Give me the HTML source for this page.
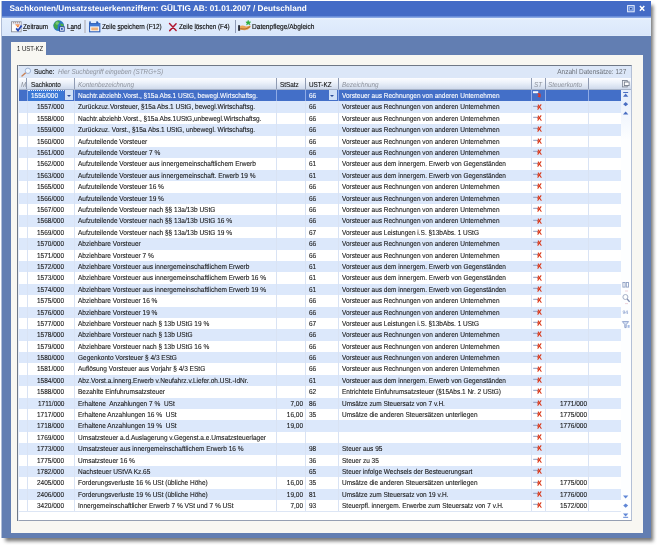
<!DOCTYPE html>
<html><head><meta charset="utf-8">
<style>
html,body{margin:0;padding:0;background:#fff;}
body{width:658px;height:547px;position:relative;overflow:hidden;text-rendering:geometricPrecision;font-family:"Liberation Sans",sans-serif;font-size:7.2px;color:#151515;}
*{box-sizing:border-box;}
.abs{position:absolute;}
i.s{display:inline-block;font-style:normal;transform:scaleX(.91);transform-origin:0 50%;white-space:nowrap;}
i.n{display:inline-block;font-style:normal;transform:scaleX(.9);transform-origin:100% 50%;white-space:nowrap;}
i.it{font-style:italic;}
#win{will-change:transform;left:1.5px;top:1.2px;width:648.5px;height:536.8px;background:#627eb2;box-shadow:-1px 0 0 0 rgba(98,126,178,.5),2.5px 3.5px 3.5px 0 rgba(30,30,30,.6);}
#title{left:0;top:0;width:100%;height:14.8px;background:#446bc6;color:#fff;font-weight:bold;font-size:8.2px;line-height:16px;padding-left:7.6px;white-space:nowrap;}
#tline{left:0;top:14.6px;width:100%;height:2.2px;background:linear-gradient(#5b80d2,#9ab6ea);}
#tool{left:0;top:16.7px;width:100%;height:18.2px;background:linear-gradient(#ecf3fe 0,#e2edfc 2px,#dbe8fb 15px,#d8e6fa 17px,#e6effc 18.2px);}
#tool .t{position:absolute;top:0;line-height:18.2px;font-size:7.3px;white-space:nowrap;color:#0c0c0c;-webkit-text-stroke:.15px #0c0c0c;}
#tool .t i.s{transform:scaleX(.865);}
#tool u{text-decoration:underline;text-decoration-thickness:.6px;text-underline-offset:.6px;text-decoration-color:#555;}
.sep{position:absolute;top:2.2px;width:1.3px;height:13px;background:#a5adc2;}
#tab{left:9.3px;top:40.5px;width:35px;height:14px;background:#f8f7f2;line-height:13.5px;padding-left:5.7px;white-space:nowrap;}
#panel{left:9.3px;top:53.5px;width:632.2px;height:478.5px;background:#f8f7f2;}
#grid{left:15.6px;top:64.1px;width:614.6px;height:456px;background:#fff;border:1px solid #6f7886;border-left-color:#e6eefa;border-right-color:#b4c0d6;border-bottom-color:#959fb2;overflow:hidden;box-shadow:-1px 0 0 0 #6f7886;}
#search{left:0;top:0;width:613px;height:11.9px;background:#dce7f8;line-height:11.6px;white-space:nowrap;}
#hdr{left:0;top:11.9px;width:613px;height:12.1px;background:linear-gradient(#fcfdff 0%,#edf2fa 40%,#cfdaec 100%);border-bottom:1.2px solid #a7b3c8;}
.h{position:absolute;top:0;height:11px;line-height:12.8px;border-left:1px solid #8f9bb3;padding-left:2.9px;white-space:nowrap;color:#111;-webkit-text-stroke:.12px #111;}
.h i.s{transform:scaleX(.88);position:relative;top:.7px;}
.h.i{color:#8d929c;-webkit-text-stroke:0;}
#rows{left:0;top:24px;width:602.4px;height:431px;}
.r{position:absolute;left:0;width:602.4px;height:11.39px;line-height:11.5px;white-space:nowrap;-webkit-text-stroke:.1px currentColor;}
.r.alt{background:#dce8fb;}
.r.sel{background:#436fc8;color:#fff;}
.c{position:absolute;top:0;height:11.37px;}
.c1{left:8.4px;width:37.2px;text-align:right;}
.c2{left:59.6px;width:197px;}
.c2 i.s{transform:scaleX(.907);}
.c3{left:258px;width:26.3px;text-align:right;}
.c4{left:290.1px;width:30px;}
.c5{left:323.6px;width:188px;}
.c5 i.s{transform:scaleX(.902);}
.c6{left:513.6px;width:12px;}
.c7{left:526px;width:42.2px;text-align:right;}
.c4 i.n{transform-origin:0 50%;}
.sti{position:absolute;left:1.1px;top:1.2px;width:9px;height:8px;}
.vl{position:absolute;top:24px;width:1px;height:421.3px;background:#d9e3f4;}
.vs{position:absolute;top:24px;width:1px;height:11.4px;background:#8fabe6;}
#nav{left:602.4px;top:24px;width:10.6px;height:431px;background:linear-gradient(#e6eefb 0px,#fdfeff 50px);}
svg{position:absolute;overflow:visible;}
.ed{position:absolute;left:9.7px;top:0.4px;width:36.2px;height:10.2px;background:#3a78d6;border-top:1px dotted #e8f0ff;}
.dd{position:absolute;top:.4px;width:7.8px;height:9.6px;background:#cfe0f7;}
.dd:after{content:"";position:absolute;left:1.7px;top:4.2px;border:2.1px solid transparent;border-top:2.6px solid #2d4e9a;border-bottom:none;}
</style></head><body>
<div id="win" class="abs">
 <div id="title" class="abs">Sachkonten/Umsatzsteuerkennziffern: GÜLTIG AB: 01.01.2007 / Deutschland</div>
 <!-- window buttons -->
 <svg style="left:625.2px;top:4px" width="20" height="8" viewBox="0 0 20 8">
  <rect x="0.6" y="0.6" width="6.6" height="6.2" fill="#5f86d8" stroke="#e6edfc" stroke-width="1"/>
  <rect x="2.2" y="2" width="3.4" height="3.4" fill="#9db8ee"/>
  <rect x="3.1" y="2.9" width="1.6" height="1.6" fill="#1f3f8f"/>
  <path d="M12.9 0.9 L17.3 5.7 M17.3 0.9 L12.9 5.7" stroke="#fff" stroke-width="1.5"/>
 </svg>
 <div id="tline" class="abs"></div>
 <div id="tool" class="abs">
  <!-- calendar icon -->
  <svg style="left:8.6px;top:3px" width="12" height="12" viewBox="0 0 12 12">
   <rect x="0.5" y="0.8" width="9.6" height="10" fill="#fdfdfd" stroke="#8a8f9a" stroke-width=".9"/>
   <rect x="1.2" y="1.2" width="8.4" height="2.4" fill="#e9ecf2"/>
   <path d="M2 1.8h1.2M4 1.8h1.2M6 1.8h1.2M8 1.8h1" stroke="#8a6a6a" stroke-width=".9"/>
   <path d="M4.2 3.6 L8.8 3.6 L7 6.6 Z" fill="#e8562a"/>
   <path d="M4.8 4.4 L7.8 4.4" stroke="#ffd36a" stroke-width=".8"/>
   <path d="M5.2 7.4 L7 9.6 L10.6 4.6" stroke="#2448b8" stroke-width="1.7" fill="none"/>
  </svg>
  <span class="t" style="left:21.4px"><i class="s"><u>Z</u>eitraum</i></span>
  <!-- globe -->
  <svg style="left:51px;top:2.8px" width="12" height="12" viewBox="0 0 12 12">
   <circle cx="5.7" cy="5.7" r="5.4" fill="#2c78c8"/>
   <path d="M2.2 2.2 C3.6 0.6 6 0.4 7.2 1.4 C6.6 3 5.4 3.2 5 4.6 C4.4 6.2 5.2 7.6 4.2 9.4 C2.6 9.6 0.8 7.6 0.6 5.6 C0.8 4 1.4 3 2.2 2.2Z" fill="#3fa548"/>
   <path d="M7.6 3.6 C9 3.2 10.4 4 10.8 5.4 C10.4 6.6 9.2 6.8 8.2 6.2 C7.4 5.6 7 4.4 7.6 3.6Z" fill="#4cb04a"/>
   <circle cx="4.2" cy="3.2" r="1.6" fill="#a6e09a" opacity=".55"/>
   <rect x="6.6" y="6.8" width="4.6" height="4.4" fill="#f4f7fc" stroke="#1d3f8c" stroke-width=".9"/>
   <rect x="7.8" y="8" width="2" height="1.8" fill="#2a56b8"/>
  </svg>
  <span class="t" style="left:64.6px"><i class="s">L<u>a</u>nd</i></span>
  <div class="sep" style="left:82.4px;background:#c3c8d4;width:1.8px"></div>
  <!-- save -->
  <svg style="left:87.2px;top:3.2px" width="12" height="12" viewBox="0 0 12 12">
   <rect x="0.6" y="2.6" width="10.2" height="8.2" fill="#fbfcff" stroke="#2e5eb4" stroke-width="1.1"/>
   <rect x="0.2" y="0.4" width="1.6" height="3" fill="#2e5eb4"/>
   <rect x="7.2" y="0.4" width="1.8" height="3" fill="#2e5eb4"/>
   <path d="M9 1 L11.2 3.2 L9 3.2Z" fill="#3c74d0"/>
   <rect x="0.6" y="2.8" width="10.2" height="2.6" fill="#3f78d4"/>
   <rect x="2.2" y="6.4" width="7" height="3" fill="#f6c89a"/>
   <path d="M2.6 7.3h6.2M2.6 8.6h6.2" stroke="#e8a468" stroke-width=".7"/>
  </svg>
  <span class="t" style="left:100px"><i class="s">Zeile <u>s</u>peichern (F12)</i></span>
  <!-- red X -->
  <svg style="left:166.6px;top:5.2px" width="8.2" height="8.6" viewBox="0 0 9 9" preserveAspectRatio="none">
   <path d="M0.6 0.6 L7.8 7.8 M7.8 0.8 L0.8 8" stroke="#b0142e" stroke-width="1.6" stroke-linecap="round"/>
  </svg>
  <span class="t" style="left:177.3px"><i class="s">Zeile <u>l</u>öschen (F4)</i></span>
  <div class="sep" style="left:233.4px;background:#8e9ab6;width:1px"></div>
  <!-- hand -->
  <svg style="left:236.4px;top:2.8px" width="14" height="12" viewBox="0 0 14 12">
   <rect x="0.1" y="5.2" width="2" height="5.6" fill="#2b2f3a"/>
   <path d="M2.1 6.2 C4 4.8 6 6 8 6.4 C10 6.6 11.6 5.4 12.8 6 C12.6 8 9.6 10.4 6.6 10.2 C4.8 10 3.4 9.6 2.1 9.8Z" fill="#e9a557"/>
   <path d="M2.1 8.8 C4.6 8.6 7.4 10.2 12 6.6" stroke="#a45f22" stroke-width=".9" fill="none"/>
   <path d="M10.2 0.4 L10.9 2 L12.6 2 L11.3 3.1 L11.9 4.8 L10.2 3.8 L8.6 4.8 L9.2 3.1 L7.9 2 L9.6 2Z" fill="#2fae3a" stroke="#2fae3a" stroke-width=".7"/>
  </svg>
  <span class="t" style="left:249.7px"><i class="s" style="transform:scaleX(.9)">Datenpflege/Abgleich</i></span>
 </div>
 <div id="tab" class="abs"><i class="s" style="transform:scaleX(.83)">1 UST-KZ</i></div>
 <div id="panel" class="abs"></div>
 <div id="grid" class="abs">
  <div id="search" class="abs">
   <svg style="left:2.1px;top:0.9px" width="12" height="10" viewBox="0 0 12 10">
    <path d="M1 9 L5 5.4" stroke="#c98258" stroke-width="1.4" stroke-linecap="round"/>
    <circle cx="6.9" cy="3.8" r="2.7" fill="#eef6ff" stroke="#9fb4d6" stroke-width="1"/>
   </svg>
   <span style="position:absolute;left:15.5px;color:#111;-webkit-text-stroke:.12px #111"><i class="s">Suche:</i></span>
   <span style="position:absolute;left:39.8px;color:#8d929c"><i class="s it" style="transform:scaleX(.885)">Hier Suchbegriff eingeben (STRG+S)</i></span>
   <span style="position:absolute;right:5.4px;color:#6b7078"><i class="s" style="transform-origin:100% 50%;transform:scaleX(.905)">Anzahl Datensätze: 127</i></span>
  </div>
  <div id="hdr" class="abs">
   <span class="h i" style="left:0.6px;width:8px;padding-left:1.5px;border-left:none"><i class="s it">M</i></span>
   <span class="h" style="left:7.8px;width:48px;padding-left:3.8px"><i class="s">Sachkonto</i></span>
   <span class="h i" style="left:55.8px;width:201px"><i class="s it">Kontenbezeichnung</i></span>
   <span class="h" style="left:257.1px;width:29px"><i class="s">StSatz</i></span>
   <span class="h" style="left:286.2px;width:34px"><i class="s">UST-KZ</i></span>
   <span class="h i" style="left:319.7px;width:192px"><i class="s it">Bezeichnung</i></span>
   <span class="h i" style="left:512.4px;width:14px;padding-left:1.8px"><i class="s it">ST</i></span>
   <span class="h i" style="left:526px;width:44px"><i class="s it">Steuerkonto</i></span>
   <span class="h" style="left:569.3px;width:20px"></span>
   <svg style="left:603.2px;top:2.4px" width="8" height="8" viewBox="0 0 9 8" preserveAspectRatio="none">
    <rect x="0.5" y="0.5" width="5.4" height="6.4" fill="#f4f6fa" stroke="#7c8494" stroke-width=".9"/>
    <rect x="2.6" y="2" width="5.4" height="3.6" fill="#fdfdfe" stroke="#6f7786" stroke-width=".9"/>
   </svg>
  </div>
  <div id="rows" class="abs">
<div class="r sel" style="top:0.00px"><span class="ed"></span><span class="c" style="left:12.9px"><i class="n" style="transform-origin:0 50%">1556/000</i></span><span class="dd" style="left:46.8px"></span><span class="c c2"><i class="s">Nachtr.abziehb.Vorst., §15a Abs.1 UStG, bewegl.Wirtschaftsg.</i></span><span class="c c3"><i class="n"></i></span><span class="c c4"><i class="n">66</i></span><span class="dd" style="left:310.2px"></span><span class="c c5"><i class="s">Vorsteuer aus Rechnungen von anderen Unternehmen</i></span><span class="c c6"><svg class="sti" viewBox="0 0 9 8"><rect x="0" y="0.2" width="5.2" height="2" fill="#f4f7fd"/><path d="M4.6 2.6 L7.6 3.4 M5.4 2.6 L7.2 6.4 M4.8 5.4 L7.8 4.6" stroke="#d8382a" stroke-width="1.2" fill="none"/></svg></span><span class="c c7"><i class="n"></i></span></div>
<div class="r alt" style="top:11.39px"><span class="c c1"><i class="n">1557/000</i></span><span class="c c2"><i class="s">Zurückzuz.Vorsteuer, §15a Abs.1 UStG, bewegl.Wirtschaftsg.</i></span><span class="c c3"><i class="n"></i></span><span class="c c4"><i class="n">66</i></span><span class="c c5"><i class="s">Vorsteuer aus Rechnungen von anderen Unternehmen</i></span><span class="c c6"><svg class="sti" viewBox="0 0 9 8"><path d="M0.2 3.3 L5 3.3" stroke="#8c9abf" stroke-width="1"/><path d="M4 3.9 L6.6 3.9 M4.6 6.6 L8.2 1.4 M5 1.6 L8.4 6.8" stroke="#da3a1c" stroke-width="1.05" fill="none"/></svg></span><span class="c c7"><i class="n"></i></span></div>
<div class="r" style="top:22.78px"><span class="c c1"><i class="n">1558/000</i></span><span class="c c2"><i class="s">Nachtr.abziehb.Vorst., §15a Abs.1UStG,unbewegl.Wirtschaftsg.</i></span><span class="c c3"><i class="n"></i></span><span class="c c4"><i class="n">66</i></span><span class="c c5"><i class="s">Vorsteuer aus Rechnungen von anderen Unternehmen</i></span><span class="c c6"><svg class="sti" viewBox="0 0 9 8"><path d="M0.2 3.3 L5 3.3" stroke="#8c9abf" stroke-width="1"/><path d="M4 3.9 L6.6 3.9 M4.6 6.6 L8.2 1.4 M5 1.6 L8.4 6.8" stroke="#da3a1c" stroke-width="1.05" fill="none"/></svg></span><span class="c c7"><i class="n"></i></span></div>
<div class="r alt" style="top:34.17px"><span class="c c1"><i class="n">1559/000</i></span><span class="c c2"><i class="s">Zurückzuz. Vorst., §15a Abs.1 UStG, unbewegl. Wirtschaftsg.</i></span><span class="c c3"><i class="n"></i></span><span class="c c4"><i class="n">66</i></span><span class="c c5"><i class="s">Vorsteuer aus Rechnungen von anderen Unternehmen</i></span><span class="c c6"><svg class="sti" viewBox="0 0 9 8"><path d="M0.2 3.3 L5 3.3" stroke="#8c9abf" stroke-width="1"/><path d="M4 3.9 L6.6 3.9 M4.6 6.6 L8.2 1.4 M5 1.6 L8.4 6.8" stroke="#da3a1c" stroke-width="1.05" fill="none"/></svg></span><span class="c c7"><i class="n"></i></span></div>
<div class="r" style="top:45.56px"><span class="c c1"><i class="n">1560/000</i></span><span class="c c2"><i class="s">Aufzuteilende Vorsteuer</i></span><span class="c c3"><i class="n"></i></span><span class="c c4"><i class="n">66</i></span><span class="c c5"><i class="s">Vorsteuer aus Rechnungen von anderen Unternehmen</i></span><span class="c c6"><svg class="sti" viewBox="0 0 9 8"><path d="M0.2 3.3 L5 3.3" stroke="#8c9abf" stroke-width="1"/><path d="M4 3.9 L6.6 3.9 M4.6 6.6 L8.2 1.4 M5 1.6 L8.4 6.8" stroke="#da3a1c" stroke-width="1.05" fill="none"/></svg></span><span class="c c7"><i class="n"></i></span></div>
<div class="r alt" style="top:56.95px"><span class="c c1"><i class="n">1561/000</i></span><span class="c c2"><i class="s">Aufzuteilende Vorsteuer 7 %</i></span><span class="c c3"><i class="n"></i></span><span class="c c4"><i class="n">66</i></span><span class="c c5"><i class="s">Vorsteuer aus Rechnungen von anderen Unternehmen</i></span><span class="c c6"><svg class="sti" viewBox="0 0 9 8"><path d="M0.2 3.3 L5 3.3" stroke="#8c9abf" stroke-width="1"/><path d="M4 3.9 L6.6 3.9 M4.6 6.6 L8.2 1.4 M5 1.6 L8.4 6.8" stroke="#da3a1c" stroke-width="1.05" fill="none"/></svg></span><span class="c c7"><i class="n"></i></span></div>
<div class="r" style="top:68.34px"><span class="c c1"><i class="n">1562/000</i></span><span class="c c2"><i class="s">Aufzuteilende Vorsteuer aus innergemeinschaftlichem Erwerb</i></span><span class="c c3"><i class="n"></i></span><span class="c c4"><i class="n">61</i></span><span class="c c5"><i class="s">Vorsteuer aus dem innergem. Erwerb von Gegenständen</i></span><span class="c c6"><svg class="sti" viewBox="0 0 9 8"><path d="M0.2 3.3 L5 3.3" stroke="#8c9abf" stroke-width="1"/><path d="M4 3.9 L6.6 3.9 M4.6 6.6 L8.2 1.4 M5 1.6 L8.4 6.8" stroke="#da3a1c" stroke-width="1.05" fill="none"/></svg></span><span class="c c7"><i class="n"></i></span></div>
<div class="r alt" style="top:79.73px"><span class="c c1"><i class="n">1563/000</i></span><span class="c c2"><i class="s">Aufzuteilende Vorsteuer aus innergemeinschaft. Erwerb 19 %</i></span><span class="c c3"><i class="n"></i></span><span class="c c4"><i class="n">61</i></span><span class="c c5"><i class="s">Vorsteuer aus dem innergem. Erwerb von Gegenständen</i></span><span class="c c6"><svg class="sti" viewBox="0 0 9 8"><path d="M0.2 3.3 L5 3.3" stroke="#8c9abf" stroke-width="1"/><path d="M4 3.9 L6.6 3.9 M4.6 6.6 L8.2 1.4 M5 1.6 L8.4 6.8" stroke="#da3a1c" stroke-width="1.05" fill="none"/></svg></span><span class="c c7"><i class="n"></i></span></div>
<div class="r" style="top:91.12px"><span class="c c1"><i class="n">1565/000</i></span><span class="c c2"><i class="s">Aufzuteilende Vorsteuer 16 %</i></span><span class="c c3"><i class="n"></i></span><span class="c c4"><i class="n">66</i></span><span class="c c5"><i class="s">Vorsteuer aus Rechnungen von anderen Unternehmen</i></span><span class="c c6"><svg class="sti" viewBox="0 0 9 8"><path d="M0.2 3.3 L5 3.3" stroke="#8c9abf" stroke-width="1"/><path d="M4 3.9 L6.6 3.9 M4.6 6.6 L8.2 1.4 M5 1.6 L8.4 6.8" stroke="#da3a1c" stroke-width="1.05" fill="none"/></svg></span><span class="c c7"><i class="n"></i></span></div>
<div class="r alt" style="top:102.51px"><span class="c c1"><i class="n">1566/000</i></span><span class="c c2"><i class="s">Aufzuteilende Vorsteuer 19 %</i></span><span class="c c3"><i class="n"></i></span><span class="c c4"><i class="n">66</i></span><span class="c c5"><i class="s">Vorsteuer aus Rechnungen von anderen Unternehmen</i></span><span class="c c6"><svg class="sti" viewBox="0 0 9 8"><path d="M0.2 3.3 L5 3.3" stroke="#8c9abf" stroke-width="1"/><path d="M4 3.9 L6.6 3.9 M4.6 6.6 L8.2 1.4 M5 1.6 L8.4 6.8" stroke="#da3a1c" stroke-width="1.05" fill="none"/></svg></span><span class="c c7"><i class="n"></i></span></div>
<div class="r" style="top:113.90px"><span class="c c1"><i class="n">1567/000</i></span><span class="c c2"><i class="s">Aufzuteilende Vorsteuer nach §§ 13a/13b UStG</i></span><span class="c c3"><i class="n"></i></span><span class="c c4"><i class="n">66</i></span><span class="c c5"><i class="s">Vorsteuer aus Rechnungen von anderen Unternehmen</i></span><span class="c c6"><svg class="sti" viewBox="0 0 9 8"><path d="M0.2 3.3 L5 3.3" stroke="#8c9abf" stroke-width="1"/><path d="M4 3.9 L6.6 3.9 M4.6 6.6 L8.2 1.4 M5 1.6 L8.4 6.8" stroke="#da3a1c" stroke-width="1.05" fill="none"/></svg></span><span class="c c7"><i class="n"></i></span></div>
<div class="r alt" style="top:125.29px"><span class="c c1"><i class="n">1568/000</i></span><span class="c c2"><i class="s">Aufzuteilende Vorsteuer nach §§ 13a/13b UStG 16 %</i></span><span class="c c3"><i class="n"></i></span><span class="c c4"><i class="n">66</i></span><span class="c c5"><i class="s">Vorsteuer aus Rechnungen von anderen Unternehmen</i></span><span class="c c6"><svg class="sti" viewBox="0 0 9 8"><path d="M0.2 3.3 L5 3.3" stroke="#8c9abf" stroke-width="1"/><path d="M4 3.9 L6.6 3.9 M4.6 6.6 L8.2 1.4 M5 1.6 L8.4 6.8" stroke="#da3a1c" stroke-width="1.05" fill="none"/></svg></span><span class="c c7"><i class="n"></i></span></div>
<div class="r" style="top:136.68px"><span class="c c1"><i class="n">1569/000</i></span><span class="c c2"><i class="s">Aufzuteilende Vorsteuer nach §§ 13a/13b UStG 19 %</i></span><span class="c c3"><i class="n"></i></span><span class="c c4"><i class="n">67</i></span><span class="c c5"><i class="s">Vorsteuer aus Leistungen i.S. §13bAbs. 1 UStG</i></span><span class="c c6"><svg class="sti" viewBox="0 0 9 8"><path d="M0.2 3.3 L5 3.3" stroke="#8c9abf" stroke-width="1"/><path d="M4 3.9 L6.6 3.9 M4.6 6.6 L8.2 1.4 M5 1.6 L8.4 6.8" stroke="#da3a1c" stroke-width="1.05" fill="none"/></svg></span><span class="c c7"><i class="n"></i></span></div>
<div class="r alt" style="top:148.07px"><span class="c c1"><i class="n">1570/000</i></span><span class="c c2"><i class="s">Abziehbare Vorsteuer</i></span><span class="c c3"><i class="n"></i></span><span class="c c4"><i class="n">66</i></span><span class="c c5"><i class="s">Vorsteuer aus Rechnungen von anderen Unternehmen</i></span><span class="c c6"><svg class="sti" viewBox="0 0 9 8"><path d="M0.2 3.3 L5 3.3" stroke="#8c9abf" stroke-width="1"/><path d="M4 3.9 L6.6 3.9 M4.6 6.6 L8.2 1.4 M5 1.6 L8.4 6.8" stroke="#da3a1c" stroke-width="1.05" fill="none"/></svg></span><span class="c c7"><i class="n"></i></span></div>
<div class="r" style="top:159.46px"><span class="c c1"><i class="n">1571/000</i></span><span class="c c2"><i class="s">Abziehbare Vorsteuer 7 %</i></span><span class="c c3"><i class="n"></i></span><span class="c c4"><i class="n">66</i></span><span class="c c5"><i class="s">Vorsteuer aus Rechnungen von anderen Unternehmen</i></span><span class="c c6"><svg class="sti" viewBox="0 0 9 8"><path d="M0.2 3.3 L5 3.3" stroke="#8c9abf" stroke-width="1"/><path d="M4 3.9 L6.6 3.9 M4.6 6.6 L8.2 1.4 M5 1.6 L8.4 6.8" stroke="#da3a1c" stroke-width="1.05" fill="none"/></svg></span><span class="c c7"><i class="n"></i></span></div>
<div class="r alt" style="top:170.85px"><span class="c c1"><i class="n">1572/000</i></span><span class="c c2"><i class="s">Abziehbare Vorsteuer aus innergemeinschaftlichem Erwerb</i></span><span class="c c3"><i class="n"></i></span><span class="c c4"><i class="n">61</i></span><span class="c c5"><i class="s">Vorsteuer aus dem innergem. Erwerb von Gegenständen</i></span><span class="c c6"><svg class="sti" viewBox="0 0 9 8"><path d="M0.2 3.3 L5 3.3" stroke="#8c9abf" stroke-width="1"/><path d="M4 3.9 L6.6 3.9 M4.6 6.6 L8.2 1.4 M5 1.6 L8.4 6.8" stroke="#da3a1c" stroke-width="1.05" fill="none"/></svg></span><span class="c c7"><i class="n"></i></span></div>
<div class="r" style="top:182.24px"><span class="c c1"><i class="n">1573/000</i></span><span class="c c2"><i class="s">Abziehbare Vorsteuer aus innergemeinschaftlichem Erwerb 16 %</i></span><span class="c c3"><i class="n"></i></span><span class="c c4"><i class="n">61</i></span><span class="c c5"><i class="s">Vorsteuer aus dem innergem. Erwerb von Gegenständen</i></span><span class="c c6"><svg class="sti" viewBox="0 0 9 8"><path d="M0.2 3.3 L5 3.3" stroke="#8c9abf" stroke-width="1"/><path d="M4 3.9 L6.6 3.9 M4.6 6.6 L8.2 1.4 M5 1.6 L8.4 6.8" stroke="#da3a1c" stroke-width="1.05" fill="none"/></svg></span><span class="c c7"><i class="n"></i></span></div>
<div class="r alt" style="top:193.63px"><span class="c c1"><i class="n">1574/000</i></span><span class="c c2"><i class="s">Abziehbare Vorsteuer aus innergemeinschaftlichem Erwerb 19 %</i></span><span class="c c3"><i class="n"></i></span><span class="c c4"><i class="n">61</i></span><span class="c c5"><i class="s">Vorsteuer aus dem innergem. Erwerb von Gegenständen</i></span><span class="c c6"><svg class="sti" viewBox="0 0 9 8"><path d="M0.2 3.3 L5 3.3" stroke="#8c9abf" stroke-width="1"/><path d="M4 3.9 L6.6 3.9 M4.6 6.6 L8.2 1.4 M5 1.6 L8.4 6.8" stroke="#da3a1c" stroke-width="1.05" fill="none"/></svg></span><span class="c c7"><i class="n"></i></span></div>
<div class="r" style="top:205.02px"><span class="c c1"><i class="n">1575/000</i></span><span class="c c2"><i class="s">Abziehbare Vorsteuer 16 %</i></span><span class="c c3"><i class="n"></i></span><span class="c c4"><i class="n">66</i></span><span class="c c5"><i class="s">Vorsteuer aus Rechnungen von anderen Unternehmen</i></span><span class="c c6"><svg class="sti" viewBox="0 0 9 8"><path d="M0.2 3.3 L5 3.3" stroke="#8c9abf" stroke-width="1"/><path d="M4 3.9 L6.6 3.9 M4.6 6.6 L8.2 1.4 M5 1.6 L8.4 6.8" stroke="#da3a1c" stroke-width="1.05" fill="none"/></svg></span><span class="c c7"><i class="n"></i></span></div>
<div class="r alt" style="top:216.41px"><span class="c c1"><i class="n">1576/000</i></span><span class="c c2"><i class="s">Abziehbare Vorsteuer 19 %</i></span><span class="c c3"><i class="n"></i></span><span class="c c4"><i class="n">66</i></span><span class="c c5"><i class="s">Vorsteuer aus Rechnungen von anderen Unternehmen</i></span><span class="c c6"><svg class="sti" viewBox="0 0 9 8"><path d="M0.2 3.3 L5 3.3" stroke="#8c9abf" stroke-width="1"/><path d="M4 3.9 L6.6 3.9 M4.6 6.6 L8.2 1.4 M5 1.6 L8.4 6.8" stroke="#da3a1c" stroke-width="1.05" fill="none"/></svg></span><span class="c c7"><i class="n"></i></span></div>
<div class="r" style="top:227.80px"><span class="c c1"><i class="n">1577/000</i></span><span class="c c2"><i class="s">Abziehbare Vorsteuer nach § 13b UStG 19 %</i></span><span class="c c3"><i class="n"></i></span><span class="c c4"><i class="n">67</i></span><span class="c c5"><i class="s">Vorsteuer aus Leistungen i.S. §13bAbs. 1 UStG</i></span><span class="c c6"><svg class="sti" viewBox="0 0 9 8"><path d="M0.2 3.3 L5 3.3" stroke="#8c9abf" stroke-width="1"/><path d="M4 3.9 L6.6 3.9 M4.6 6.6 L8.2 1.4 M5 1.6 L8.4 6.8" stroke="#da3a1c" stroke-width="1.05" fill="none"/></svg></span><span class="c c7"><i class="n"></i></span></div>
<div class="r alt" style="top:239.19px"><span class="c c1"><i class="n">1578/000</i></span><span class="c c2"><i class="s">Abziehbare Vorsteuer nach § 13b UStG</i></span><span class="c c3"><i class="n"></i></span><span class="c c4"><i class="n">66</i></span><span class="c c5"><i class="s">Vorsteuer aus Rechnungen von anderen Unternehmen</i></span><span class="c c6"><svg class="sti" viewBox="0 0 9 8"><path d="M0.2 3.3 L5 3.3" stroke="#8c9abf" stroke-width="1"/><path d="M4 3.9 L6.6 3.9 M4.6 6.6 L8.2 1.4 M5 1.6 L8.4 6.8" stroke="#da3a1c" stroke-width="1.05" fill="none"/></svg></span><span class="c c7"><i class="n"></i></span></div>
<div class="r" style="top:250.58px"><span class="c c1"><i class="n">1579/000</i></span><span class="c c2"><i class="s">Abziehbare Vorsteuer nach § 13b UStG 16 %</i></span><span class="c c3"><i class="n"></i></span><span class="c c4"><i class="n">66</i></span><span class="c c5"><i class="s">Vorsteuer aus Rechnungen von anderen Unternehmen</i></span><span class="c c6"><svg class="sti" viewBox="0 0 9 8"><path d="M0.2 3.3 L5 3.3" stroke="#8c9abf" stroke-width="1"/><path d="M4 3.9 L6.6 3.9 M4.6 6.6 L8.2 1.4 M5 1.6 L8.4 6.8" stroke="#da3a1c" stroke-width="1.05" fill="none"/></svg></span><span class="c c7"><i class="n"></i></span></div>
<div class="r alt" style="top:261.97px"><span class="c c1"><i class="n">1580/000</i></span><span class="c c2"><i class="s">Gegenkonto Vorsteuer § 4/3 EStG</i></span><span class="c c3"><i class="n"></i></span><span class="c c4"><i class="n">66</i></span><span class="c c5"><i class="s">Vorsteuer aus Rechnungen von anderen Unternehmen</i></span><span class="c c6"><svg class="sti" viewBox="0 0 9 8"><path d="M0.2 3.3 L5 3.3" stroke="#8c9abf" stroke-width="1"/><path d="M4 3.9 L6.6 3.9 M4.6 6.6 L8.2 1.4 M5 1.6 L8.4 6.8" stroke="#da3a1c" stroke-width="1.05" fill="none"/></svg></span><span class="c c7"><i class="n"></i></span></div>
<div class="r" style="top:273.36px"><span class="c c1"><i class="n">1581/000</i></span><span class="c c2"><i class="s">Auflösung Vorsteuer aus Vorjahr § 4/3 EStG</i></span><span class="c c3"><i class="n"></i></span><span class="c c4"><i class="n">66</i></span><span class="c c5"><i class="s">Vorsteuer aus Rechnungen von anderen Unternehmen</i></span><span class="c c6"><svg class="sti" viewBox="0 0 9 8"><path d="M0.2 3.3 L5 3.3" stroke="#8c9abf" stroke-width="1"/><path d="M4 3.9 L6.6 3.9 M4.6 6.6 L8.2 1.4 M5 1.6 L8.4 6.8" stroke="#da3a1c" stroke-width="1.05" fill="none"/></svg></span><span class="c c7"><i class="n"></i></span></div>
<div class="r alt" style="top:284.75px"><span class="c c1"><i class="n">1584/000</i></span><span class="c c2"><i class="s">Abz.Vorst.a.innerg.Erwerb v.Neufahrz.v.Liefer.oh.USt.-IdNr.</i></span><span class="c c3"><i class="n"></i></span><span class="c c4"><i class="n">61</i></span><span class="c c5"><i class="s">Vorsteuer aus dem innergem. Erwerb von Gegenständen</i></span><span class="c c6"><svg class="sti" viewBox="0 0 9 8"><path d="M0.2 3.3 L5 3.3" stroke="#8c9abf" stroke-width="1"/><path d="M4 3.9 L6.6 3.9 M4.6 6.6 L8.2 1.4 M5 1.6 L8.4 6.8" stroke="#da3a1c" stroke-width="1.05" fill="none"/></svg></span><span class="c c7"><i class="n"></i></span></div>
<div class="r" style="top:296.14px"><span class="c c1"><i class="n">1588/000</i></span><span class="c c2"><i class="s">Bezahlte Einfuhrumsatzsteuer</i></span><span class="c c3"><i class="n"></i></span><span class="c c4"><i class="n">62</i></span><span class="c c5"><i class="s">Entrichtete Einfuhrumsatzsteuer (§15Abs.1 Nr. 2 UStG)</i></span><span class="c c6"><svg class="sti" viewBox="0 0 9 8"><path d="M0.2 3.3 L5 3.3" stroke="#8c9abf" stroke-width="1"/><path d="M4 3.9 L6.6 3.9 M4.6 6.6 L8.2 1.4 M5 1.6 L8.4 6.8" stroke="#da3a1c" stroke-width="1.05" fill="none"/></svg></span><span class="c c7"><i class="n"></i></span></div>
<div class="r alt" style="top:307.53px"><span class="c c1"><i class="n">1711/000</i></span><span class="c c2"><i class="s">Erhaltene&nbsp; Anzahlungen 7 %&nbsp; USt</i></span><span class="c c3"><i class="n">7,00</i></span><span class="c c4"><i class="n">86</i></span><span class="c c5"><i class="s">Umsätze zum Steuersatz von 7 v.H.</i></span><span class="c c6"><svg class="sti" viewBox="0 0 9 8"><path d="M0.2 3.3 L5 3.3" stroke="#8c9abf" stroke-width="1"/><path d="M4 3.9 L6.6 3.9 M4.6 6.6 L8.2 1.4 M5 1.6 L8.4 6.8" stroke="#da3a1c" stroke-width="1.05" fill="none"/></svg></span><span class="c c7"><i class="n">1771/000</i></span></div>
<div class="r" style="top:318.92px"><span class="c c1"><i class="n">1717/000</i></span><span class="c c2"><i class="s">Erhaltene Anzahlungen 16 %&nbsp; USt</i></span><span class="c c3"><i class="n">16,00</i></span><span class="c c4"><i class="n">35</i></span><span class="c c5"><i class="s">Umsätze die anderen Steuersätzen unterliegen</i></span><span class="c c6"><svg class="sti" viewBox="0 0 9 8"><path d="M0.2 3.3 L5 3.3" stroke="#8c9abf" stroke-width="1"/><path d="M4 3.9 L6.6 3.9 M4.6 6.6 L8.2 1.4 M5 1.6 L8.4 6.8" stroke="#da3a1c" stroke-width="1.05" fill="none"/></svg></span><span class="c c7"><i class="n">1775/000</i></span></div>
<div class="r alt" style="top:330.31px"><span class="c c1"><i class="n">1718/000</i></span><span class="c c2"><i class="s">Erhaltene Anzahlungen 19 %&nbsp; USt</i></span><span class="c c3"><i class="n">19,00</i></span><span class="c c4"><i class="n"></i></span><span class="c c5"><i class="s"></i></span><span class="c c6"><svg class="sti" viewBox="0 0 9 8"><path d="M0.2 3.3 L5 3.3" stroke="#8c9abf" stroke-width="1"/><path d="M4 3.9 L6.6 3.9 M4.6 6.6 L8.2 1.4 M5 1.6 L8.4 6.8" stroke="#da3a1c" stroke-width="1.05" fill="none"/></svg></span><span class="c c7"><i class="n">1776/000</i></span></div>
<div class="r" style="top:341.70px"><span class="c c1"><i class="n">1769/000</i></span><span class="c c2"><i class="s">Umsatzsteuer a.d.Auslagerung v.Gegenst.a.e.Umsatzsteuerlager</i></span><span class="c c3"><i class="n"></i></span><span class="c c4"><i class="n"></i></span><span class="c c5"><i class="s"></i></span><span class="c c6"><svg class="sti" viewBox="0 0 9 8"><path d="M0.2 3.3 L5 3.3" stroke="#8c9abf" stroke-width="1"/><path d="M4 3.9 L6.6 3.9 M4.6 6.6 L8.2 1.4 M5 1.6 L8.4 6.8" stroke="#da3a1c" stroke-width="1.05" fill="none"/></svg></span><span class="c c7"><i class="n"></i></span></div>
<div class="r alt" style="top:353.09px"><span class="c c1"><i class="n">1773/000</i></span><span class="c c2"><i class="s">Umsatzsteuer aus innergemeinschaftlichem Erwerb 16 %</i></span><span class="c c3"><i class="n"></i></span><span class="c c4"><i class="n">98</i></span><span class="c c5"><i class="s">Steuer aus 95</i></span><span class="c c6"><svg class="sti" viewBox="0 0 9 8"><path d="M0.2 3.3 L5 3.3" stroke="#8c9abf" stroke-width="1"/><path d="M4 3.9 L6.6 3.9 M4.6 6.6 L8.2 1.4 M5 1.6 L8.4 6.8" stroke="#da3a1c" stroke-width="1.05" fill="none"/></svg></span><span class="c c7"><i class="n"></i></span></div>
<div class="r" style="top:364.48px"><span class="c c1"><i class="n">1775/000</i></span><span class="c c2"><i class="s">Umsatzsteuer 16 %</i></span><span class="c c3"><i class="n"></i></span><span class="c c4"><i class="n">36</i></span><span class="c c5"><i class="s">Steuer zu 35</i></span><span class="c c6"><svg class="sti" viewBox="0 0 9 8"><path d="M0.2 3.3 L5 3.3" stroke="#8c9abf" stroke-width="1"/><path d="M4 3.9 L6.6 3.9 M4.6 6.6 L8.2 1.4 M5 1.6 L8.4 6.8" stroke="#da3a1c" stroke-width="1.05" fill="none"/></svg></span><span class="c c7"><i class="n"></i></span></div>
<div class="r alt" style="top:375.87px"><span class="c c1"><i class="n">1782/000</i></span><span class="c c2"><i class="s">Nachsteuer UStVA Kz.65</i></span><span class="c c3"><i class="n"></i></span><span class="c c4"><i class="n">65</i></span><span class="c c5"><i class="s">Steuer infolge Wechsels der Besteuerungsart</i></span><span class="c c6"><svg class="sti" viewBox="0 0 9 8"><path d="M0.2 3.3 L5 3.3" stroke="#8c9abf" stroke-width="1"/><path d="M4 3.9 L6.6 3.9 M4.6 6.6 L8.2 1.4 M5 1.6 L8.4 6.8" stroke="#da3a1c" stroke-width="1.05" fill="none"/></svg></span><span class="c c7"><i class="n"></i></span></div>
<div class="r" style="top:387.26px"><span class="c c1"><i class="n">2405/000</i></span><span class="c c2"><i class="s">Forderungsverluste 16 % USt (übliche Höhe)</i></span><span class="c c3"><i class="n">16,00</i></span><span class="c c4"><i class="n">35</i></span><span class="c c5"><i class="s">Umsätze die anderen Steuersätzen unterliegen</i></span><span class="c c6"><svg class="sti" viewBox="0 0 9 8"><path d="M0.2 3.3 L5 3.3" stroke="#8c9abf" stroke-width="1"/><path d="M4 3.9 L6.6 3.9 M4.6 6.6 L8.2 1.4 M5 1.6 L8.4 6.8" stroke="#da3a1c" stroke-width="1.05" fill="none"/></svg></span><span class="c c7"><i class="n">1775/000</i></span></div>
<div class="r alt" style="top:398.65px"><span class="c c1"><i class="n">2406/000</i></span><span class="c c2"><i class="s">Forderungsverluste 19 % USt (übliche Höhe)</i></span><span class="c c3"><i class="n">19,00</i></span><span class="c c4"><i class="n">81</i></span><span class="c c5"><i class="s">Umsätze zum Steuersatz von 19 v.H.</i></span><span class="c c6"><svg class="sti" viewBox="0 0 9 8"><path d="M0.2 3.3 L5 3.3" stroke="#8c9abf" stroke-width="1"/><path d="M4 3.9 L6.6 3.9 M4.6 6.6 L8.2 1.4 M5 1.6 L8.4 6.8" stroke="#da3a1c" stroke-width="1.05" fill="none"/></svg></span><span class="c c7"><i class="n">1776/000</i></span></div>
<div class="r" style="top:410.04px"><span class="c c1"><i class="n">3420/000</i></span><span class="c c2"><i class="s">Innergemeinschaftlicher Erwerb 7 % VSt und 7 % USt</i></span><span class="c c3"><i class="n">7,00</i></span><span class="c c4"><i class="n">93</i></span><span class="c c5"><i class="s">Steuerpfl. innergem. Erwerbe zum Steuersatz von 7 v.H.</i></span><span class="c c6"><svg class="sti" viewBox="0 0 9 8"><path d="M0.2 3.3 L5 3.3" stroke="#8c9abf" stroke-width="1"/><path d="M4 3.9 L6.6 3.9 M4.6 6.6 L8.2 1.4 M5 1.6 L8.4 6.8" stroke="#da3a1c" stroke-width="1.05" fill="none"/></svg></span><span class="c c7"><i class="n">1572/000</i></span></div>
  </div>
  <div class="abs" style="left:0;top:445.3px;width:602.4px;height:1px;background:#dde6f5"></div>
  <div class="vl" style="left:8.5px"></div>
  <div class="vl" style="left:55.8px"></div>
  <div class="vl" style="left:257.1px"></div>
  <div class="vl" style="left:286.2px"></div>
  <div class="vl" style="left:319.7px"></div>
  <div class="vl" style="left:512.4px"></div>
  <div class="vl" style="left:526px"></div>
  <div class="vl" style="left:569.3px"></div>
  <div class="vs" style="left:8.5px"></div>
  <div class="vs" style="left:55.8px"></div>
  <div class="vs" style="left:257.1px"></div>
  <div class="vs" style="left:286.2px"></div>
  <div class="vs" style="left:319.7px"></div>
  <div class="vs" style="left:512.4px"></div>
  <div class="vs" style="left:526px"></div>
  <div class="vs" style="left:569.3px"></div>
  <div id="nav" class="abs">
   <svg style="left:1.9px;top:2px" width="5.5" height="24" viewBox="0 0 6 24" preserveAspectRatio="none">
    <g fill="#4a6ec2">
     <rect x="0.2" y="0" width="5.4" height="1"/>
     <path d="M2.9 1.6 L5.8 4.8 L0 4.8Z"/>
     <path d="M2.9 10 L5.6 12.2 L2.9 14.2 L0.2 12.2Z"/>
     <path d="M2.9 19.4 L5.8 22.4 L0 22.4Z"/>
    </g>
   </svg>
   <svg style="left:1.2px;top:192px" width="8" height="48" viewBox="0 0 8 48">
    <g fill="none" stroke="#8fa0c4" stroke-width=".9">
     <rect x="0.9" y="0.5" width="2.2" height="4.6"/><rect x="4.3" y="0.5" width="2.2" height="4.6"/>
     <circle cx="3.4" cy="15" r="2.5" stroke="#9aa6c0"/><path d="M5.2 17 L7.6 19.8" stroke="#7f8cae" stroke-width="1.3"/>
    </g>
    <path d="M3 9 h3" stroke="#e8c0cc" stroke-width=".7"/><path d="M3 21.6 h3" stroke="#e8c0cc" stroke-width=".7"/>
    <text x="0.4" y="31.6" font-family="Liberation Sans" font-size="5.2" fill="#98abd4" font-weight="bold">94</text>
    <path d="M0.4 39.6 L6.6 39.6 L4.2 42.6 L4.2 45.6 L2.8 45.6 L2.8 42.6Z" fill="#d8e2f4" stroke="#7f94c4" stroke-width=".8"/>
    <rect x="5.6" y="43" width="2" height="2.8" fill="#a8bce4"/>
   </svg>
   <svg style="left:1.9px;top:404.6px" width="5.5" height="24" viewBox="0 0 6 24" preserveAspectRatio="none">
    <g fill="#5f86d6">
     <path d="M0 0.4 L5.8 0.4 L2.9 3.4Z"/>
     <path d="M2.9 8.6 L5.6 10.6 L2.9 12.8 L0.2 10.6Z"/>
     <path d="M0 18.4 L5.8 18.4 L2.9 21.4Z"/>
     <rect x="0.2" y="21.8" width="5.4" height="1"/>
    </g>
   </svg>
  </div>
 </div>
</div>
</body></html>
